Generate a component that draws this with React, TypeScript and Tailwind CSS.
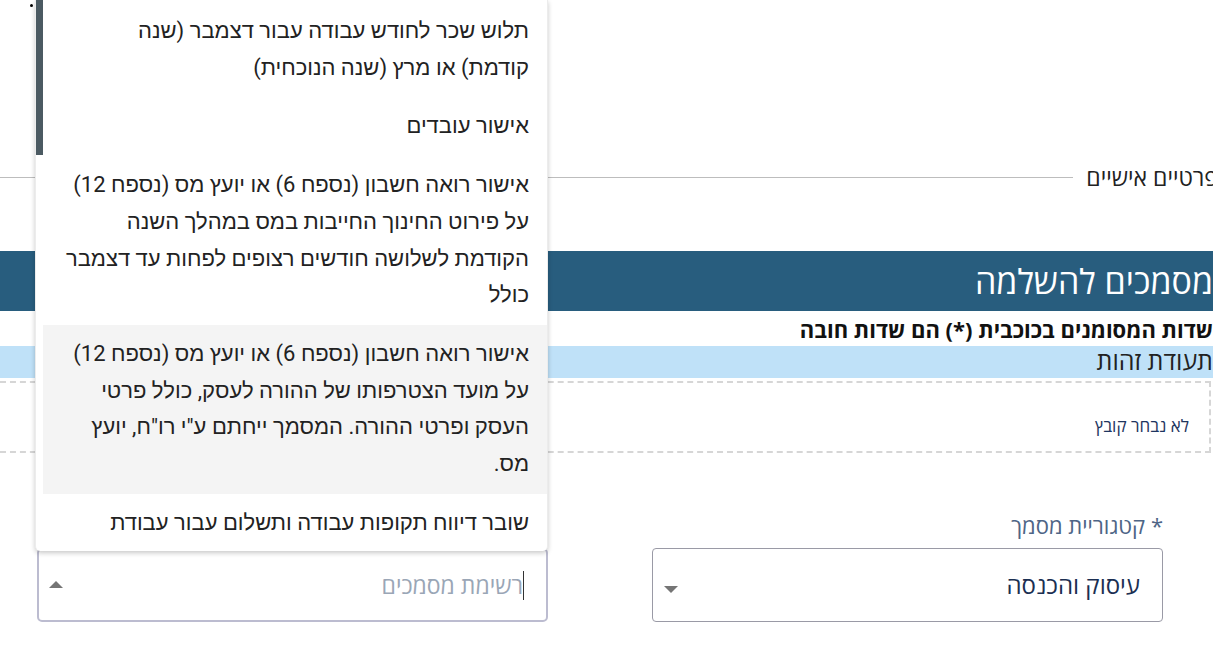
import React from "react";

const items: { lines: string[]; active?: boolean }[] = [
  { lines: ["תלוש שכר לחודש עבודה עבור דצמבר (שנה", "קודמת) או מרץ (שנה הנוכחית)"] },
  { lines: ["אישור עובדים"] },
  {
    lines: [
      "אישור רואה חשבון (נספח 6) או יועץ מס (נספח 12)",
      "על פירוט החינוך החייבות במס במהלך השנה",
      "הקודמת לשלושה חודשים רצופים לפחות עד דצמבר",
      "כולל",
    ],
  },
  {
    lines: [
      "אישור רואה חשבון (נספח 6) או יועץ מס (נספח 12)",
      "על מועד הצטרפותו של ההורה לעסק, כולל פרטי",
      'העסק ופרטי ההורה. המסמך ייחתם ע"י רו"ח, יועץ',
      "מס.",
    ],
    active: true,
  },
  { lines: ["שובר דיווח תקופות עבודה ותשלום עבור עבודת"] },
];

function Tri({ up }: { up?: boolean }) {
  return (
    <svg width="14" height="7" viewBox="0 0 14 7" className="shrink-0">
      {up ? <path d="M0 7 L7 0 L14 7 Z" fill="#757575" /> : <path d="M0 0 L14 0 L7 7 Z" fill="#757575" />}
    </svg>
  );
}

export default function App() {
  return (
    <div
      dir="rtl"
      className="relative w-[1213px] h-[655px] overflow-hidden bg-white font-['Open_Sans','Liberation_Sans',sans-serif] text-[#222]"
    >
      {/* personal details divider */}
      <div className="mt-[164px] flex items-center h-[26px]">
        <span className="-mr-[5px] text-[23px] leading-[26px] whitespace-nowrap text-[#222]">פרטיים אישיים</span>
        <div className="flex-1 h-px bg-[#bdbdbd] mr-[13px]" />
      </div>

      {/* section header */}
      <div className="mt-[61px] h-[60px] bg-[#285d7e] flex items-center text-white text-[34px] whitespace-nowrap">
        מסמכים להשלמה
      </div>

      <div className="h-[35px] flex items-center font-bold text-[22px] leading-[30px] text-[#111] whitespace-nowrap pt-[1px]">
        שדות המסומנים בכוכבית (*) הם שדות חובה
      </div>

      <div className="h-[32px] bg-[#bfe1f8] flex items-center pb-[3px] text-[25px] leading-[29px] text-[#222] whitespace-nowrap">
        תעודת זהות
      </div>

      <div className="mt-[3px] mr-[2px] h-[72px] border-2 border-l-0 border-dashed border-[#d6d6d6] flex items-center pt-[18px] pr-[20px] text-[17px] text-[#1e3560]">
        לא נבחר קובץ
      </div>

      {/* form */}
      <div className="mt-[60px] flex gap-[104px] pr-[50px] pl-[37px]">
        <div className="w-[511px]">
          <div className="h-[24px] leading-[24px] text-[22px] text-[#4e6586] whitespace-nowrap">* קטגוריית מסמך</div>
          <div className="mt-[11px] h-[74px] border border-[#9a9aa6] rounded-[4px] flex items-center justify-between pr-[22px] pl-[11px]">
            <span className="text-[24px] text-[#1b2f52]">עיסוק והכנסה</span>
            <span className="mt-[8px]">
              <Tri />
            </span>
          </div>
        </div>
        <div className="w-[511px]">
          <div className="h-[24px]" />
          <div className="mt-[11px] h-[74px] border-2 border-[#bcbcd0] rounded-[5px] flex items-center justify-between pr-[22px] pl-[10px]">
            <div className="flex items-center">
              <span className="w-px h-[29px] bg-[#333]" />
              <span className="text-[23px] text-[#9aa6b6]">רשימת מסמכים</span>
            </div>
            <span className="-mt-[2px]">
              <Tri up />
            </span>
          </div>
        </div>
      </div>

      {/* bullet dot */}
      <div className="absolute left-[30px] top-[4px] w-[3px] h-[3px] rounded-full bg-black" />

      {/* open dropdown list */}
      <div className="absolute left-[35px] top-0 w-[513px] h-[551px] bg-white rounded-b-[5px] border-x border-[#ececec] shadow-[0_2px_5px_rgba(0,0,0,0.22)] overflow-hidden font-['Roboto','Liberation_Sans',sans-serif]">
        <div className="absolute left-0 top-0 w-[7px] h-[155px] bg-[#4b5a62]" />
        <div className="pl-[7px] pt-[2px]">
          {items.map((it, i) => (
            <div
              key={i}
              className={`py-[11px] pr-[18px] pl-[8px] text-[22px] leading-[36.7px] text-[#222] ${it.active ? "bg-[#f4f4f4]" : ""}`}
            >
              {it.lines.map((l, j) => (
                <div key={j} className="whitespace-nowrap">
                  {l}
                </div>
              ))}
            </div>
          ))}
        </div>
      </div>
    </div>
  );
}
